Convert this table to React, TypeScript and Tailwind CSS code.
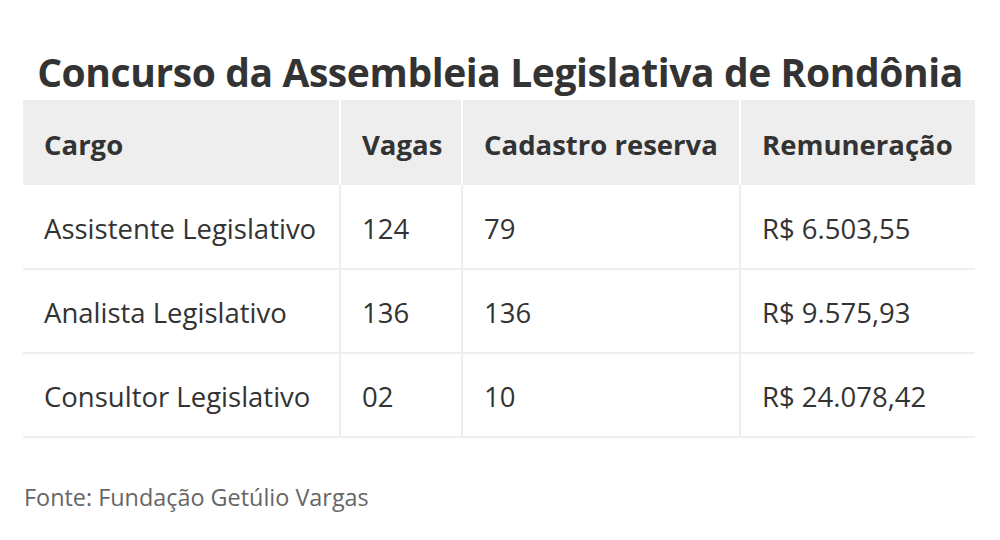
import React from "react";

const rows = [
  ["Assistente Legislativo", "124", "79", "R$ 6.503,55"],
  ["Analista Legislativo", "136", "136", "R$ 9.575,93"],
  ["Consultor Legislativo", "02", "10", "R$ 24.078,42"],
];

export default function App() {
  return (
    <div
      className="w-[1000px] h-[540px] bg-white text-[#333333] overflow-hidden"
      style={{ fontFamily: '"Open Sans", "Noto Sans", sans-serif' }}
    >
      <h1 className="pt-[44px] text-center text-[39px] leading-[56px] font-bold tracking-[-0.4px]">
        Concurso da Assembleia Legislativa de Rondônia
      </h1>
      <table className="ml-[23px] w-[952px] border-collapse table-fixed text-[27.5px]">
        <colgroup>
          <col className="w-[317px]" />
          <col className="w-[122px]" />
          <col className="w-[278px]" />
          <col className="w-[235px]" />
        </colgroup>
        <thead>
          <tr className="h-[85px] bg-[#eeeeee]">
            {["Cargo", "Vagas", "Cadastro reserva", "Remuneração"].map((h) => (
              <th
                key={h}
                className="px-[21px] pt-[4px] text-left font-bold border-x-2 border-white first:border-l-0 last:border-r-0"
              >
                {h}
              </th>
            ))}
          </tr>
        </thead>
        <tbody>
          {rows.map((r) => (
            <tr key={r[0]} className="h-[84px] border-b-2 border-[#eeeeee]">
              {r.map((c, i) => (
                <td
                  key={i}
                  className="px-[21px] pt-[4px] border-x-2 border-[#eeeeee] first:border-l-0 last:border-r-0"
                >
                  {c}
                </td>
              ))}
            </tr>
          ))}
        </tbody>
      </table>
      <p className="ml-[24px] mt-[42px] text-[23.4px] text-[#666666]">
        Fonte: Fundação Getúlio Vargas
      </p>
    </div>
  );
}
